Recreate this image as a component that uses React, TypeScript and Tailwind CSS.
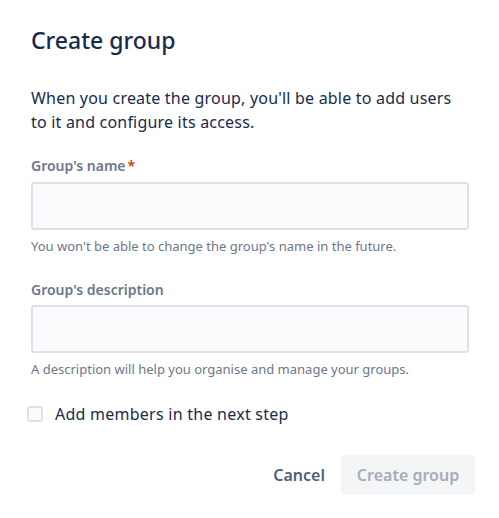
import React from "react";

export default function App() {
  return (
    <div className="w-[499px] h-[518px] bg-white text-[#172B4D]" style={{ fontFamily: '"Noto Sans", "Open Sans", sans-serif' }}>
      <div className="pl-[31px] pr-[30px] pt-[24px]">
        <h1 className="text-[23px] leading-[32px] font-medium text-[#172B4D]">Create group</h1>
        <p className="mt-[30px] text-[16px] leading-[24px] tracking-[0.2px] text-[#172B4D]">
          When you create the group, you'll be able to add users to it and configure its access.
        </p>
        <div className="mt-[22px]">
          <label className="flex text-[14px] leading-[20px] font-semibold text-[#6B778C]">
            Group's name<span className="ml-[2px] text-[#DE350B]">*</span>
          </label>
          <div className="mt-[6px] h-[48px] rounded-[3px] border-2 border-[#DFE1E6] bg-[#FAFBFC]" />
          <div className="mt-[7px] text-[13px] leading-[18px] text-[#6B778C]">
            You won't be able to change the group's name in the future.
          </div>
        </div>
        <div className="mt-[25px]">
          <label className="flex text-[14px] leading-[20px] font-semibold text-[#6B778C]">Group's description</label>
          <div className="mt-[5px] h-[48px] rounded-[3px] border-2 border-[#DFE1E6] bg-[#FAFBFC]" />
          <div className="mt-[7px] text-[13px] leading-[18px] text-[#6B778C]">
            A description will help you organise and manage your groups.
          </div>
        </div>
      </div>
      <div className="mt-[26px] ml-[27px] flex items-center gap-[12px]">
        <div className="w-[16px] h-[16px] rounded-[3px] border-2 border-[#DFE1E6] bg-[#FAFBFC]" />
        <span className="text-[16px] leading-[20px] tracking-[0.25px] text-[#172B4D]">Add members in the next step</span>
      </div>
      <div className="mt-[31px] mr-[24px] flex justify-end items-center gap-[8px]">
        <button className="h-[40px] px-[8px] text-[16px] font-semibold text-[#505F79]">Cancel</button>
        <button className="h-[40px] w-[134px] rounded-[3px] bg-[#F4F5F7] text-[16px] font-semibold text-[#A5ADBA]">Create group</button>
      </div>
    </div>
  );
}
